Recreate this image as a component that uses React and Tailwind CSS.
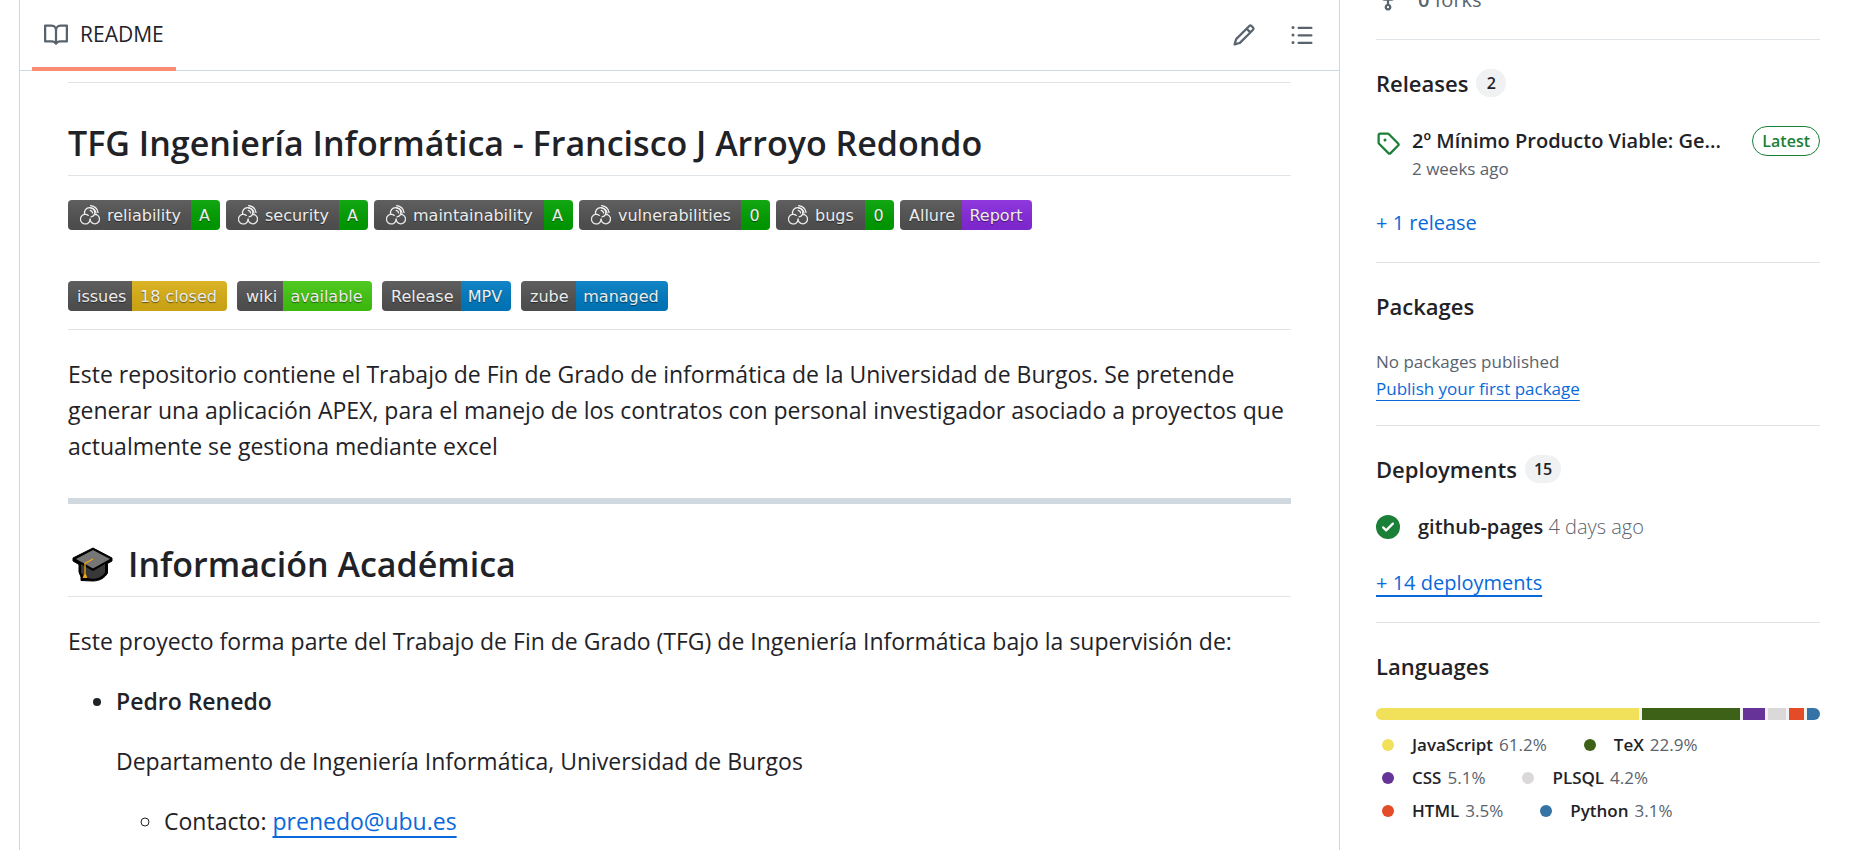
const ICONS = {
  book: "M0 1.75A.75.75 0 0 1 .75 1h4.253c1.227 0 2.317.59 3 1.501A3.743 3.743 0 0 1 11.006 1h4.245a.75.75 0 0 1 .75.75v10.5a.75.75 0 0 1-.75.75h-4.507a2.25 2.25 0 0 0-1.591.659l-.622.621a.75.75 0 0 1-1.06 0l-.622-.621A2.25 2.25 0 0 0 5.258 13H.75a.75.75 0 0 1-.75-.75Zm7.251 10.324.004-5.073-.002-2.253A2.25 2.25 0 0 0 5.003 2.5H1.5v9h3.757a3.75 3.75 0 0 1 1.994.574ZM8.755 4.75l-.004 7.322a3.752 3.752 0 0 1 1.992-.572H14.5v-9h-3.495a2.25 2.25 0 0 0-2.25 2.25Z",
  pencil: "M11.013 1.427a1.75 1.75 0 0 1 2.474 0l1.086 1.086a1.75 1.75 0 0 1 0 2.474l-8.61 8.61c-.21.21-.47.364-.756.445l-3.251.93a.75.75 0 0 1-.927-.928l.929-3.25c.081-.286.235-.547.445-.758l8.61-8.61Zm.176 4.823L9.75 4.81l-6.286 6.287a.253.253 0 0 0-.064.108l-.558 1.953 1.953-.558a.253.253 0 0 0 .108-.064Zm1.238-3.763a.25.25 0 0 0-.354 0L10.811 3.75l1.439 1.44 1.263-1.263a.25.25 0 0 0 0-.354Z",
  list: "M5.75 2.5h8.5a.75.75 0 0 1 0 1.5h-8.5a.75.75 0 0 1 0-1.5Zm0 5h8.5a.75.75 0 0 1 0 1.5h-8.5a.75.75 0 0 1 0-1.5Zm0 5h8.5a.75.75 0 0 1 0 1.5h-8.5a.75.75 0 0 1 0-1.5ZM2 14a1 1 0 1 1 0-2 1 1 0 0 1 0 2Zm1-6a1 1 0 1 1-2 0 1 1 0 0 1 2 0ZM2 4a1 1 0 1 1 0-2 1 1 0 0 1 0 2Z",
  tag: "M1 7.775V2.75C1 1.784 1.784 1 2.75 1h5.025c.464 0 .91.184 1.238.513l6.25 6.25a1.75 1.75 0 0 1 0 2.474l-5.026 5.026a1.75 1.75 0 0 1-2.474 0l-6.25-6.25A1.752 1.752 0 0 1 1 7.775Zm1.5 0c0 .066.026.13.073.177l6.25 6.25a.25.25 0 0 0 .354 0l5.025-5.025a.25.25 0 0 0 0-.354l-6.25-6.25a.25.25 0 0 0-.177-.073H2.75a.25.25 0 0 0-.25.25ZM6 5a1 1 0 1 1 0 2 1 1 0 0 1 0-2Z",
  fork: "M5 5.372v.878c0 .414.336.75.75.75h4.5a.75.75 0 0 0 .75-.75v-.878a2.25 2.25 0 1 1 1.5 0v.878a2.25 2.25 0 0 1-2.25 2.25h-1.5v2.128a2.251 2.251 0 1 1-1.5 0V8.5h-1.5A2.25 2.25 0 0 1 3.5 6.25v-.878a2.25 2.25 0 1 1 1.5 0ZM5 3.25a.75.75 0 1 0-1.5 0 .75.75 0 0 0 1.5 0Zm6.75.75a.75.75 0 1 0 0-1.5.75.75 0 0 0 0 1.5Zm-3 8.75a.75.75 0 1 0-1.5 0 .75.75 0 0 0 1.5 0Z",
  check: "M8 16A8 8 0 1 1 8 0a8 8 0 0 1 0 16Zm3.78-9.72a.751.751 0 0 0-.018-1.042.751.751 0 0 0-1.042-.018L6.75 9.19 5.28 7.72a.751.751 0 0 0-1.042.018.751.751 0 0 0-.018 1.042l2 2a.75.75 0 0 0 1.06 0Z",
};

function Icon({ name, className = "" }) {
  return (
    <svg viewBox="0 0 16 16" className={`size-6 shrink-0 fill-current ${className}`} aria-hidden="true">
      <path d={ICONS[name]} />
    </svg>
  );
}

function SonarLogo() {
  return (
    <svg viewBox="0 0 20 20" className="size-5 shrink-0" fill="none" stroke="#fff" strokeWidth="1.3" strokeLinecap="round" aria-hidden="true">
      <path d="M4.7 9.3 A5.2 5.2 0 1 1 14.6 9.4" />
      <path d="M8.3 10.4 A4.8 4.8 0 1 0 10.1 14.2" />
      <path d="M10.1 14.2 A4.7 4.7 0 1 0 14.6 9.4 C13.8 10.8 12.4 11.7 11 11.8" />
      <path d="M10.2 5.4 C11.6 5.7 12.4 6.5 12.6 7.8" />
      <path d="M10.4 2.8 C13.6 3.2 15.6 5.2 16 8" />
      <path d="M10.6 0.7 C14.6 1.2 17.4 3.8 18 7.4" />
    </svg>
  );
}

function GraduationCap() {
  return (
    <svg viewBox="0 0 42 36" className="h-9 w-[42px] shrink-0" aria-hidden="true">
      <path d="M21 2 L40 12 V15 L35.5 17.5 V27 C33 32 27 35 21 35 L9 34.5 V31 L7 26 V18.5 L1 15 V12 Z" fill="#000" stroke="#000" strokeLinejoin="round" />
      <path d="M9 18 L21 25 L33 18 V26.5 C31 30 26 32.8 21 32.8 C16 32.8 11 30 9 26.5 Z" fill="#383838" />
      <path d="M21 4 L38 13 L21 22.6 L4 13 Z" fill="#767676" />
      <path d="M21 13 L13 17.5 V27" fill="none" stroke="#f2a50c" strokeWidth="1.3" />
      <path d="M13 26 L15.4 32 H10.6 Z" fill="#f2a50c" />
    </svg>
  );
}

const QUALITY = [
  { label: "reliability", value: "A", tone: "w-[29px] bg-[#00a500]", width: "w-[123px]", sonar: true },
  { label: "security", value: "A", tone: "w-[29px] bg-[#00a500]", width: "w-[113px]", sonar: true },
  { label: "maintainability", value: "A", tone: "w-[29px] bg-[#00a500]", width: "w-[170px]", sonar: true },
  { label: "vulnerabilities", value: "0", tone: "w-[29px] bg-[#00a500]", width: "w-[162px]", sonar: true },
  { label: "bugs", value: "0", tone: "w-[29px] bg-[#00a500]", width: "w-[89px]", sonar: true },
  { label: "Allure", value: "Report", tone: "w-[70px] bg-[#8a2be2]", width: "w-[62px]" },
];

const PROJECT = [
  { label: "issues", value: "18 closed", tone: "w-[95px] bg-[#dfb317]", width: "w-16" },
  { label: "wiki", value: "available", tone: "w-[89px] bg-[#4c1]", width: "w-[46px]" },
  { label: "Release", value: "MPV", tone: "w-[50px] bg-[#007ec6]", width: "w-[79px]" },
  { label: "zube", value: "managed", tone: "w-[92px] bg-[#007ec6]", width: "w-[55px]" },
];

function Badge({ label, value, tone, width, sonar }) {
  return (
    <a
      href="#badge"
      className="relative flex h-[30px] overflow-hidden rounded font-['DejaVu_Sans',sans-serif] text-base leading-8 text-white [text-shadow:0_1px_1px_rgba(1,1,1,0.5)]"
    >
      <span className={`flex bg-[#555] ${width} ${sonar ? "gap-[7px] pl-3" : "pl-[9px]"}`}>
        {sonar && <span className="flex items-center"><SonarLogo /></span>}
        {label}
      </span>
      <span className={`pr-0.5 text-center ${tone}`}>{value}</span>
      <span className="absolute inset-0 bg-gradient-to-b from-[#bbb]/10 to-black/10" />
    </a>
  );
}

function SideSection({ title, count, children }) {
  return (
    <section className="border-b border-[#d1d9e0b3] pt-[25px] pb-[23px] last:border-0">
      <h2 className="mb-6 flex items-center gap-2 text-[22px] leading-9 font-semibold">
        <a href="#section">{title}</a>
        {count && (
          <span className="min-w-[30px] rounded-full bg-[#eff1f3] px-[9px] text-center text-base leading-7">{count}</span>
        )}
      </h2>
      {children}
    </section>
  );
}

const LANGUAGES = [
  { name: "JavaScript", share: 61.2, color: "bg-[#f1e05a]" },
  { name: "TeX", share: 22.9, color: "bg-[#3d6117]" },
  { name: "CSS", share: 5.1, color: "bg-[#663399]" },
  { name: "PLSQL", share: 4.2, color: "bg-[#dad8d8]" },
  { name: "HTML", share: 3.5, color: "bg-[#e34c26]" },
  { name: "Python", share: 3.1, color: "bg-[#3572a5]" },
];

export default function App() {
  return (
    <div className="flex bg-white font-['Open_Sans',sans-serif] text-[#1f2328]">
      <main className="ml-[19px] min-h-screen min-w-0 flex-1 border-x border-[#d1d9e0]">
        <nav className="flex h-[71px] items-stretch justify-between border-b border-[#d1d9e0] pr-[25px] pl-3">
          <a href="#readme" className="-mb-px flex items-center gap-3 border-b-4 border-[#fd8c73] px-3 pt-[3px] text-[21px] font-medium">
            <Icon name="book" className="text-[#59636e]" />
            README
          </a>
          <div className="flex items-center gap-[34px] text-[#59636e]">
            <button type="button" aria-label="Edit file"><Icon name="pencil" /></button>
            <button type="button" aria-label="Outline"><Icon name="list" /></button>
          </div>
        </nav>

        <article className="px-12 pt-[11px] text-[23px] leading-9">
          <hr className="border-[#d1d9e0b3]" />
          <h1 className="mt-9 border-b border-[#d1d9e0b3] pb-2 text-[34px] leading-12 font-semibold">
            TFG Ingeniería Informática - Francisco J Arroyo Redondo
          </h1>
          <div className="mt-6 flex flex-wrap gap-[6px]">
            {QUALITY.map((b) => <Badge key={b.label} {...b} />)}
          </div>
          <div className="mt-[51px] flex flex-wrap gap-[10px]">
            {PROJECT.map((b) => <Badge key={b.label} {...b} />)}
          </div>
          <hr className="mt-[18px] border-[#d1d9e0b3]" />
          <p className="mt-[26px]">
            Este repositorio contiene el Trabajo de Fin de Grado de informática de la Universidad de Burgos. Se pretende generar una aplicación APEX, para el manejo de los contratos con personal investigador asociado a proyectos que actualmente se gestiona mediante excel
          </p>
          <hr className="mt-[34px] mb-9 h-[6px] border-0 bg-[#d1d9e0]" />
          <h1 className="flex items-center gap-[14px] border-b border-[#d1d9e0b3] pb-2 pl-1 text-[34px] leading-12 font-semibold">
            <GraduationCap />
            Información Académica
          </h1>
          <p className="mt-[26px]">
            Este proyecto forma parte del Trabajo de Fin de Grado (TFG) de Ingeniería Informática bajo la supervisión de:
          </p>
          <ul className="mt-6 list-disc pl-12">
            <li>
              <p className="font-semibold">Pedro Renedo</p>
              <p className="mt-6">Departamento de Ingeniería Informática, Universidad de Burgos</p>
              <ul className="mt-6 list-[circle] pl-12">
                <li>
                  Contacto:{" "}
                  <a href="mailto:prenedo@ubu.es" className="text-[#0969da] underline decoration-2 underline-offset-[6px]">prenedo@ubu.es</a>
                </li>
              </ul>
            </li>
          </ul>
        </article>
      </main>

      <aside className="w-[512px] shrink-0 pr-8 pl-9">
        <div className="-mt-3 flex h-[52px] items-start gap-[18px] border-b border-[#d1d9e0b3] text-xl leading-6 text-[#59636e]">
          <Icon name="fork" />
          <a href="#forks"><strong className="font-semibold">0</strong> forks</a>
        </div>

        <SideSection title="Releases" count="2">
          <div className="flex items-start gap-3 pb-0.5">
            <Icon name="tag" className="mt-1.5 text-[#1a7f37]" />
            <div className="min-w-0 flex-1">
              <a href="#release" className="flex items-center justify-between gap-6">
                <span className="text-xl leading-8 font-semibold whitespace-nowrap">2º Mínimo Producto Viable: Ge...</span>
                <span className="shrink-0 rounded-full border border-[#1a7f37] px-[9px] text-base leading-7 font-semibold text-[#1a7f37]">Latest</span>
              </a>
              <div className="text-[17px] leading-6 text-[#59636e]">2 weeks ago</div>
            </div>
          </div>
          <a href="#releases" className="mt-6 inline-block text-xl leading-8 text-[#0969da]">+ 1 release</a>
        </SideSection>

        <SideSection title="Packages">
          <div className="text-[17px] leading-[27px] text-[#59636e]">
            No packages published
            <br />
            <a href="#publish" className="text-[#0969da] underline decoration-1 underline-offset-[5px]">Publish your first package</a>
          </div>
        </SideSection>

        <SideSection title="Deployments" count="15">
          <div className="flex items-center gap-[18px] text-xl leading-8">
            <Icon name="check" className="text-[#1a7f37]" />
            <span>
              <a href="#pages" className="font-semibold">github-pages</a>{" "}
              <span className="font-light text-[#59636e]">4 days ago</span>
            </span>
          </div>
          <a href="#deployments" className="mt-6 inline-block text-xl leading-8 text-[#0969da] underline decoration-2 underline-offset-[5px]">+ 14 deployments</a>
        </SideSection>

        <SideSection title="Languages">
          <div className="flex h-3 gap-[3px] overflow-hidden rounded-full bg-[#eff1f3]">
            {LANGUAGES.map((l) => (
              <span key={l.name} className={l.color} style={{ flexGrow: l.share }} />
            ))}
          </div>
          <ul className="mt-2 flex flex-wrap text-[17px] leading-[33px]">
            {LANGUAGES.map((l) => (
              <li key={l.name} className="mr-[31px] flex items-center">
                <span className={`mr-[18px] ml-[6px] size-3 rounded-full ${l.color}`} />
                <span className="mr-[6px] font-semibold">{l.name}</span>
                <span className="text-[#59636e]">{l.share}%</span>
              </li>
            ))}
          </ul>
        </SideSection>
      </aside>
    </div>
  );
}
